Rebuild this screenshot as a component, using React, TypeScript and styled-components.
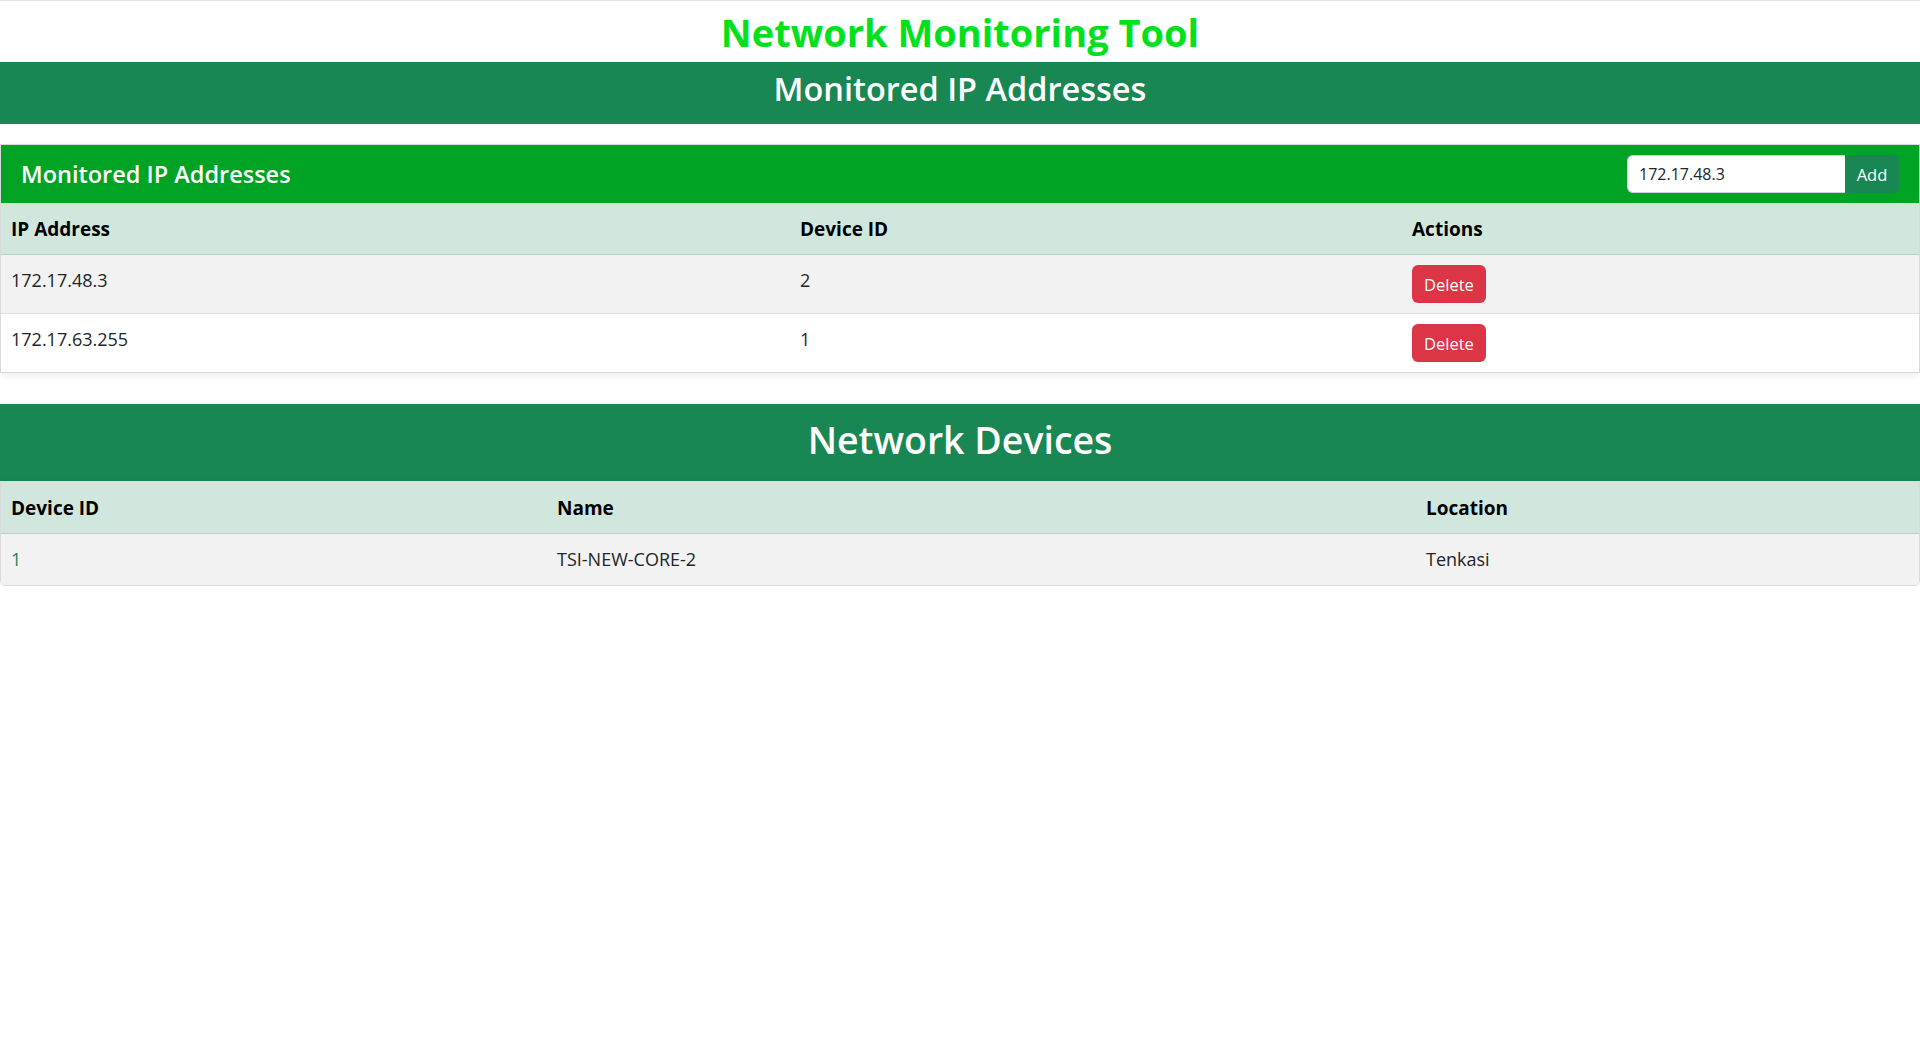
import React from "react";
import styled, { createGlobalStyle } from "styled-components";

const GlobalStyle = createGlobalStyle`
  html, body {
    margin: 0;
    padding: 0;
    background: #ffffff;
  }
  body {
    font-family: "Open Sans", "Noto Sans", "Liberation Sans", sans-serif;
    color: #212529;
  }
  * { box-sizing: border-box; }
`;

const Page = styled.div`
  border-top: 1px solid #e2e2e2;
  display: flex;
  flex-direction: column;
`;

const TopTitle = styled.h1`
  margin: 0;
  padding: 7px 0 6px;
  font-size: 38px;
  line-height: 48px;
  font-weight: 700;
  text-align: center;
  color: #02e11b;
`;

const Band = styled.h2<{ $size: "md" | "lg" }>`
  margin: 0;
  background: #198754;
  color: #ffffff;
  text-align: center;
  font-weight: 600;
  font-size: ${(p) => (p.$size === "lg" ? "37.5px" : "32.5px")};
  line-height: 1.2;
  padding: ${(p) => (p.$size === "lg" ? "13px 0 19px" : "7px 0 16px")};
`;

const Card = styled.section<{ $rounded?: boolean; $gapTop?: number; $gapBottom?: number }>`
  border: 1px solid #dadada;
  border-radius: ${(p) => (p.$rounded ? "0 0 6px 6px" : "0")};
  overflow: hidden;
  box-shadow: 0 3px 8px rgba(0, 0, 0, 0.07);
  margin-top: ${(p) => p.$gapTop ?? 0}px;
  margin-bottom: ${(p) => p.$gapBottom ?? 0}px;
  background: #ffffff;
`;

const CardHeader = styled.header`
  background: #00a324;
  height: 58px;
  padding: 0 20px;
  display: flex;
  align-items: center;
  justify-content: space-between;
`;

const CardTitle = styled.h4`
  margin: 0;
  color: #ffffff;
  font-size: 23.5px;
  line-height: 1.2;
  font-weight: 600;
`;

const AddForm = styled.form`
  display: flex;
  align-items: stretch;
  height: 38px;
`;

const IpInput = styled.input`
  width: 218px;
  height: 38px;
  border: 1px solid #ced4da;
  border-right: none;
  border-radius: 6px 0 0 6px;
  padding: 0 11px;
  font-family: inherit;
  font-size: 16px;
  color: #212529;
  background: #ffffff;
  outline: none;
`;

const AddButton = styled.button`
  width: 54px;
  height: 38px;
  border: none;
  border-radius: 0 6px 6px 0;
  background: #198754;
  color: #ffffff;
  font-family: inherit;
  font-size: 16.5px;
  padding: 0;
  cursor: pointer;
`;

const Table = styled.table`
  width: 100%;
  border-collapse: collapse;
  table-layout: fixed;
  font-size: 18px;
  line-height: 1.5;
`;

const HeadRow = styled.tr`
  background: #d1e7dd;
  border-bottom: 1px solid #bcd0c7;
`;

const HeadCell = styled.th`
  text-align: left;
  font-weight: 700;
  font-size: 19px;
  line-height: 27px;
  color: #000000;
  padding: 13px 10px 11px;
  vertical-align: top;
`;

const BodyRow = styled.tr<{ $striped?: boolean; $last?: boolean }>`
  background: ${(p) => (p.$striped ? "#f2f2f2" : "#ffffff")};
  border-bottom: ${(p) => (p.$last ? "none" : "1px solid #dee2e6")};
`;

const Cell = styled.td<{ $padTop?: number; $padBottom?: number; $accent?: boolean }>`
  padding: ${(p) => p.$padTop ?? 12}px 10px ${(p) => p.$padBottom ?? 12}px;
  vertical-align: top;
  color: ${(p) => (p.$accent ? "#198754" : "#212529")};
`;

const DeleteButton = styled.button`
  display: block;
  height: 38px;
  padding: 0 12px;
  border: none;
  border-radius: 6px;
  background: #dc3545;
  color: #ffffff;
  font-family: inherit;
  font-size: 16.5px;
  cursor: pointer;
`;

const ips = [
  { ip: "172.17.48.3", device: "2" },
  { ip: "172.17.63.255", device: "1" },
];

const devices = [{ id: "1", name: "TSI-NEW-CORE-2", location: "Tenkasi" }];

export default function App() {
  return (
    <>
      <GlobalStyle />
      <Page>
        <TopTitle>Network Monitoring Tool</TopTitle>
        <Band $size="md">Monitored IP Addresses</Band>

        <Card $gapTop={20} $gapBottom={31}>
          <CardHeader>
            <CardTitle>Monitored IP Addresses</CardTitle>
            <AddForm onSubmit={(e) => e.preventDefault()}>
              <IpInput type="text" defaultValue="172.17.48.3" />
              <AddButton type="submit">Add</AddButton>
            </AddForm>
          </CardHeader>
          <Table>
            <colgroup>
              <col style={{ width: 789 }} />
              <col style={{ width: 612 }} />
              <col />
            </colgroup>
            <thead>
              <HeadRow>
                <HeadCell>IP Address</HeadCell>
                <HeadCell>Device ID</HeadCell>
                <HeadCell>Actions</HeadCell>
              </HeadRow>
            </thead>
            <tbody>
              {ips.map((r, i) => (
                <BodyRow key={r.ip} $striped={i % 2 === 0} $last={i === ips.length - 1}>
                  <Cell $padTop={12} $padBottom={8}>{r.ip}</Cell>
                  <Cell $padTop={12} $padBottom={8}>{r.device}</Cell>
                  <Cell $padTop={10} $padBottom={10}>
                    <DeleteButton type="button">Delete</DeleteButton>
                  </Cell>
                </BodyRow>
              ))}
            </tbody>
          </Table>
        </Card>

        <Band $size="lg">Network Devices</Band>
        <Card $rounded>
          <Table>
            <colgroup>
              <col style={{ width: 546 }} />
              <col style={{ width: 869 }} />
              <col />
            </colgroup>
            <thead>
              <HeadRow>
                <HeadCell>Device ID</HeadCell>
                <HeadCell>Name</HeadCell>
                <HeadCell>Location</HeadCell>
              </HeadRow>
            </thead>
            <tbody>
              {devices.map((d, i) => (
                <BodyRow key={d.id} $striped={i % 2 === 0} $last={i === devices.length - 1}>
                  <Cell $accent>{d.id}</Cell>
                  <Cell>{d.name}</Cell>
                  <Cell>{d.location}</Cell>
                </BodyRow>
              ))}
            </tbody>
          </Table>
        </Card>
      </Page>
    </>
  );
}
